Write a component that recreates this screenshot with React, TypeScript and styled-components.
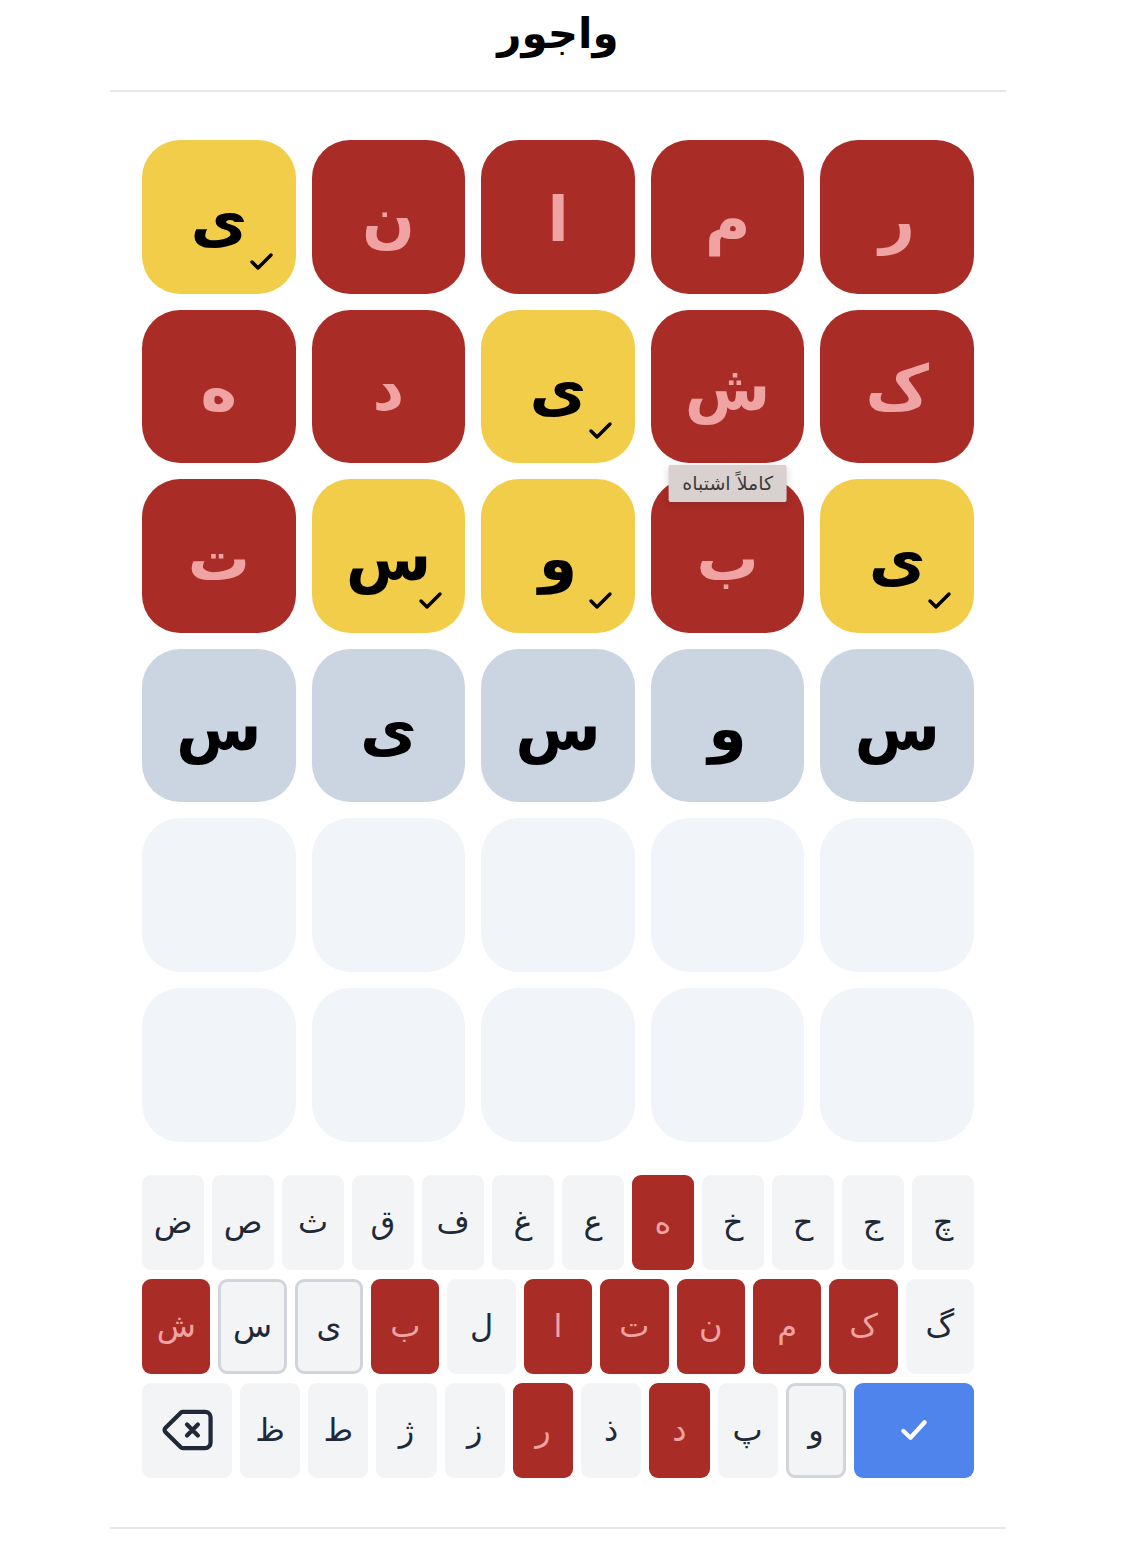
import React from "react";
import styled, { createGlobalStyle, css } from "styled-components";

const GlobalStyle = createGlobalStyle`
  html, body { margin: 0; padding: 0; background: #ffffff; }
  body { font-family: "DejaVu Sans", "Noto Sans", sans-serif; }
`;

type TileState = "wrong" | "present" | "active" | "empty";
type KeyState = "normal" | "wrong" | "present";

const Page = styled.div`
  width: 896px;
  margin-left: 110px;
  display: flex;
  flex-direction: column;
`;

const Header = styled.header`
  display: flex;
  align-items: center;
  justify-content: center;
  border-bottom: 2px solid #e5e7eb;
  box-sizing: border-box;
  height: 92px;
`;

const Title = styled.h1`
  margin: 0 0 22px;
  font-size: 42px;
  font-weight: 700;
  color: #000;
  line-height: 1;
`;

const Board = styled.div`
  padding: 48px 32px 0;
  display: grid;
  grid-template-columns: repeat(5, 1fr);
  grid-auto-rows: 153.6px;
  gap: 16px;
  direction: rtl;
`;

const tileColors: Record<TileState, ReturnType<typeof css>> = {
  wrong: css`background: #a92c26; color: #f0a3a3;`,
  present: css`background: #f2cd4a; color: #000;`,
  active: css`background: #cbd5e1; color: #000;`,
  empty: css`background: #f1f5f9; color: #000;`,
};

const Tile = styled.div<{ $state: TileState }>`
  position: relative;
  border-radius: 38px;
  display: flex;
  align-items: center;
  justify-content: center;
  font-size: 62px;
  font-weight: 700;
  ${(p) => tileColors[p.$state]}
`;

const Letter = styled.span`
  line-height: 1;
  margin-top: 6px;
`;

const TileCheck = styled.svg`
  position: absolute;
  right: 19px;
  bottom: 20px;
  width: 30px;
  height: 26px;
`;

const Tooltip = styled.div`
  position: absolute;
  top: -14px;
  left: 50%;
  transform: translateX(-50%);
  background: #d9d1cf;
  color: #3b3b3b;
  font-size: 19px;
  font-weight: 400;
  padding: 7px 14px 8px;
  border-radius: 2px;
  white-space: nowrap;
  box-shadow: 0 2px 8px rgba(0, 0, 0, 0.15);
  direction: rtl;
`;

const Keyboard = styled.div`
  margin: 33px 32px 0;
  display: flex;
  flex-direction: column;
  gap: 9px;
`;

const KeyRow = styled.div<{ $cols: string }>`
  display: grid;
  grid-template-columns: ${(p) => p.$cols};
  gap: 8px;
  height: 95px;
`;

const keyColors: Record<KeyState, ReturnType<typeof css>> = {
  normal: css`background: #f3f4f6; color: #1f2937; border: 3px solid transparent;`,
  wrong: css`background: #a92c26; color: #f0a3a3; border: 3px solid transparent;`,
  present: css`background: #f3f4f6; color: #1f2937; border: 3px solid #d1d5db;`,
};

const Key = styled.button<{ $state?: KeyState }>`
  min-width: 0;
  box-sizing: border-box;
  border-radius: 9px;
  display: flex;
  align-items: center;
  justify-content: center;
  font-family: "DejaVu Sans", sans-serif;
  font-size: 32px;
  padding: 0;
  cursor: pointer;
  ${(p) => keyColors[p.$state ?? "normal"]}
`;

const EnterKey = styled(Key)`
  background: #4f84ec;
  color: #fff;
  border: 3px solid transparent;
`;

const Footer = styled.footer`
  margin-top: 49px;
  border-top: 2px solid #e5e7eb;
  height: 28px;
`;

const CheckMark = () => (
  <TileCheck viewBox="0 0 30 26" fill="none" stroke="#000" strokeWidth={3.4} strokeLinecap="round" strokeLinejoin="round">
    <polyline points="5,14 11,20 24,7" />
  </TileCheck>
);

const rows: { l: string; s: TileState }[][] = [
  [
    { l: "ر", s: "wrong" },
    { l: "م", s: "wrong" },
    { l: "ا", s: "wrong" },
    { l: "ن", s: "wrong" },
    { l: "ی", s: "present" },
  ],
  [
    { l: "ک", s: "wrong" },
    { l: "ش", s: "wrong" },
    { l: "ی", s: "present" },
    { l: "د", s: "wrong" },
    { l: "ه", s: "wrong" },
  ],
  [
    { l: "ی", s: "present" },
    { l: "ب", s: "wrong" },
    { l: "و", s: "present" },
    { l: "س", s: "present" },
    { l: "ت", s: "wrong" },
  ],
  [
    { l: "س", s: "active" },
    { l: "و", s: "active" },
    { l: "س", s: "active" },
    { l: "ی", s: "active" },
    { l: "س", s: "active" },
  ],
  Array.from({ length: 5 }, () => ({ l: "", s: "empty" as TileState })),
  Array.from({ length: 5 }, () => ({ l: "", s: "empty" as TileState })),
];

const wrongKeys = new Set(["ه", "ش", "ب", "ا", "ت", "ن", "م", "ک", "ر", "د"]);
const presentKeys = new Set(["س", "ی", "و"]);
const keyState = (k: string): KeyState =>
  wrongKeys.has(k) ? "wrong" : presentKeys.has(k) ? "present" : "normal";

const row1 = ["ض", "ص", "ث", "ق", "ف", "غ", "ع", "ه", "خ", "ح", "ج", "چ"];
const row2 = ["ش", "س", "ی", "ب", "ل", "ا", "ت", "ن", "م", "ک", "گ"];
const row3 = ["ظ", "ط", "ژ", "ز", "ر", "ذ", "د", "پ", "و"];

const BackspaceIcon = () => (
  <svg width="58" height="58" viewBox="0 0 24 24" fill="none" stroke="#1f2937" strokeWidth={1.75} strokeLinecap="round" strokeLinejoin="round">
    <path d="M12 9.75 14.25 12m0 0 2.25 2.25M14.25 12l2.25-2.25M14.25 12 12 14.25m-2.58 4.92-6.374-6.375a1.125 1.125 0 0 1 0-1.59L9.42 4.83c.21-.211.497-.33.795-.33H19.5a2.25 2.25 0 0 1 2.25 2.25v10.5a2.25 2.25 0 0 1-2.25 2.25h-9.284c-.298 0-.585-.119-.795-.33Z" />
  </svg>
);

const EnterIcon = () => (
  <svg width="34" height="34" viewBox="0 0 24 24" fill="none" stroke="#fff" strokeWidth={3} strokeLinecap="round" strokeLinejoin="round">
    <polyline points="4.5,12.75 9.5,17.5 19.5,6.5" />
  </svg>
);

export default function App() {
  return (
    <>
      <GlobalStyle />
      <Page>
        <Header>
          <Title>واجور</Title>
        </Header>
        <Board>
          {rows.map((row, ri) =>
            row.map((t, ci) => (
              <Tile key={`${ri}-${ci}`} $state={t.s}>
                {t.l && <Letter>{t.l}</Letter>}
                {t.s === "present" && <CheckMark />}
                {ri === 2 && ci === 1 && <Tooltip>کاملاً اشتباه</Tooltip>}
              </Tile>
            ))
          )}
        </Board>
        <Keyboard>
          <KeyRow $cols="repeat(12, 1fr)">
            {row1.map((k) => (
              <Key key={k} $state={keyState(k)}>{k}</Key>
            ))}
          </KeyRow>
          <KeyRow $cols="repeat(11, 1fr)">
            {row2.map((k) => (
              <Key key={k} $state={keyState(k)}>{k}</Key>
            ))}
          </KeyRow>
          <KeyRow $cols="90px repeat(9, 1fr) 120px">
            <Key aria-label="backspace"><BackspaceIcon /></Key>
            {row3.map((k) => (
              <Key key={k} $state={keyState(k)}>{k}</Key>
            ))}
            <EnterKey aria-label="enter"><EnterIcon /></EnterKey>
          </KeyRow>
        </Keyboard>
        <Footer />
      </Page>
    </>
  );
}
